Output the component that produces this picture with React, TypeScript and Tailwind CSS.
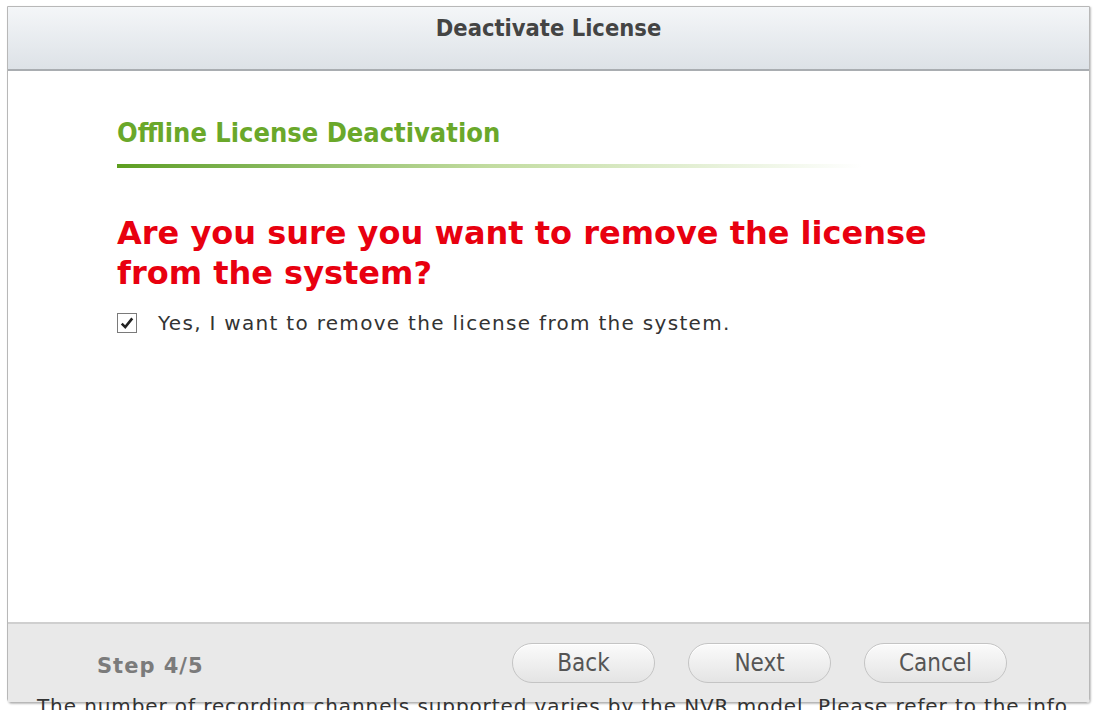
import React from 'react';

const condensed = { fontFamily: '"DejaVu Sans Condensed", "DejaVu Sans", sans-serif' };
const verdana = { fontFamily: '"DejaVu Sans", Verdana, sans-serif' };

const PillButton = ({ label }: { label: string }) => (
  <button
    className="h-[40px] w-[143px] rounded-full border border-[#c4c4c4] bg-gradient-to-b from-[#fbfbfb] to-[#e4e4e4] text-[24px] leading-none text-[#555] shadow-[inset_0_1px_0_#fff]"
    style={condensed}
  >
    {label}
  </button>
);

export default function App() {
  return (
    <div className="w-[1095px] h-[710px] overflow-hidden bg-white pt-[6px] pl-[7px] pr-[5px]">
      <div className="flex h-[697px] flex-col border border-[#b8b8b8] rounded-b-[4px] shadow-[1px_1px_2px_rgba(0,0,0,0.25)]">
        {/* header */}
        <div className="flex h-[64px] items-center justify-center border-b-2 border-[#a9adb1] bg-gradient-to-b from-[#f4f6f8] to-[#dde2e7] pb-[18px]">
          <h1 className="text-[23.5px] font-bold text-[#444]" style={condensed}>
            Deactivate License
          </h1>
        </div>

        {/* body */}
        <div className="flex-1 bg-white px-[109px] pt-[46px]">
          <h2 className="text-[27px] font-bold leading-[32px] text-[#6aa82a]" style={condensed}>
            Offline License Deactivation
          </h2>
          <div className="mt-[15px] h-[4px] w-[745px] bg-gradient-to-r from-[#5c9e1e] via-[#c2dca0] to-transparent" />
          <p className="mt-[45px] text-[32px] font-bold leading-[40px] text-[#e8000f]" style={verdana}>
            Are you sure you want to remove the license
            <br />
            from the system?
          </p>
          <label className="mt-[15px] flex items-center gap-[21px]" style={verdana}>
            <span className="flex h-[20px] w-[20px] items-center justify-center border border-[#7a7a7a] bg-white">
              <svg viewBox="0 0 12 12" className="h-[14px] w-[14px]">
                <path d="M1.5 6.5 L4.5 9.5 L10.5 2" fill="none" stroke="#222" strokeWidth="2.2" />
              </svg>
            </span>
            <span className="text-[20px] tracking-[1.3px] text-[#333]">
              Yes, I want to remove the license from the system.
            </span>
          </label>
        </div>

        {/* footer */}
        <div className="flex h-[80px] items-center border-t-2 border-[#cfcfcf] bg-[#e9e9e9] pl-[89px] pr-[82px]">
          <span className="mt-[7px] text-[21px] font-bold tracking-[1px] text-[#7b7b7b]" style={verdana}>
            Step 4/5
          </span>
          <div className="ml-auto flex gap-[33px]">
            <PillButton label="Back" />
            <PillButton label="Next" />
            <PillButton label="Cancel" />
          </div>
        </div>
      </div>
      <div
        className="-mt-[7px] whitespace-nowrap pl-[30px] text-[20px] leading-[20px] tracking-[0.9px] text-[#333]"
        style={verdana}
      >
        The number of recording channels supported varies by the NVR model. Please refer to the info
      </div>
    </div>
  );
}
